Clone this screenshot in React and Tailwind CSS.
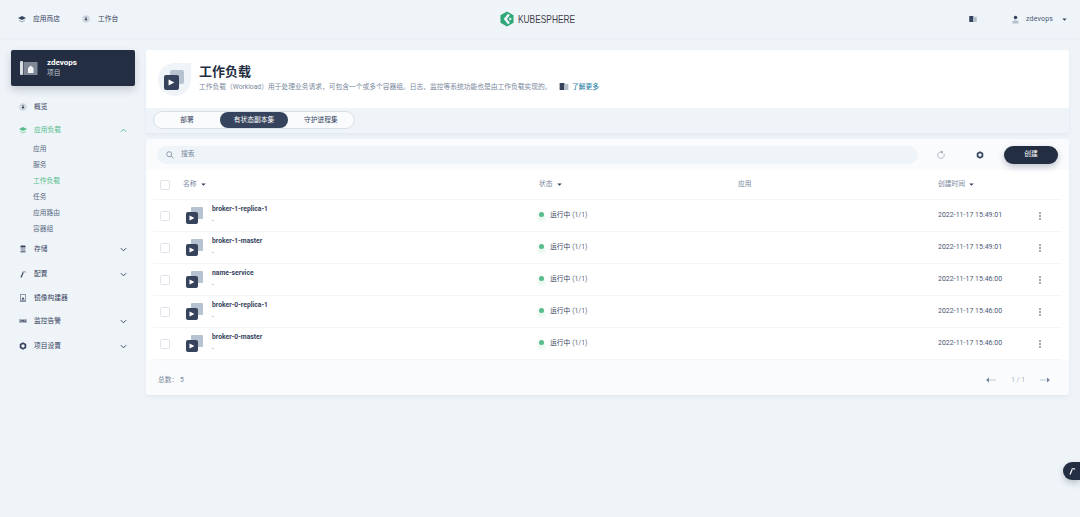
import React from 'react';

const rows = [
  { name: 'broker-1-replica-1', time: '2022-11-17 15:49:01' },
  { name: 'broker-1-master', time: '2022-11-17 15:49:01' },
  { name: 'name-service', time: '2022-11-17 15:46:00' },
  { name: 'broker-0-replica-1', time: '2022-11-17 15:46:00' },
  { name: 'broker-0-master', time: '2022-11-17 15:46:00' },
];

const subItems = ['应用', '服务', '工作负载', '任务', '应用路由', '容器组'];

// Small duotone icons, drawn on a 16 box
const LayersIcon = ({ color = '#36435c', light = '#abb4be' }) => (
  <svg className="w-[8px] h-[8px]" viewBox="0 0 16 16">
    <path d="M8 2l8 4-8 4-8-4z" fill={color} />
    <path d="M2 9.500l6 3 6-3V12l-6 3-6-3z" fill={light} />
  </svg>
);

const DashIcon = () => (
  <svg className="w-[8px] h-[8px]" viewBox="0 0 16 16">
    <circle cx="8" cy="8" r="7.500" fill="#d0d7df" />
    <path d="M8 3.500v4" stroke="#36435c" strokeWidth="1.500" />
    <circle cx="8" cy="9" r="2.200" fill="#36435c" />
  </svg>
);

const StoreIcon = () => (
  <svg className="w-[8px] h-[8px]" viewBox="0 0 16 16">
    <rect x="3" y="1" width="10" height="4" rx="1" fill="#36435c" />
    <rect x="3" y="6" width="10" height="4" fill="#abb4be" />
    <rect x="3" y="11" width="10" height="4" rx="1" fill="#6c7a90" />
  </svg>
);

const HammerIcon = ({ color = '#abb4be', handle = '#36435c', className = 'w-[8px] h-[8px]' }) => (
  <svg className={className} viewBox="0 0 16 16">
    <path d="M6 2h7l2 4-5-1.500z" fill={color} />
    <path d="M8.500 4.500L4 15" stroke={handle} strokeWidth="2.400" />
  </svg>
);

const BuilderIcon = () => (
  <svg className="w-[8px] h-[8px]" viewBox="0 0 16 16">
    <rect x="2" y="0" width="12" height="16" fill="#8e9aab" />
    <rect x="4" y="2" width="8" height="10" fill="#eff4f9" />
    <path d="M8 6l3 5H5z" fill="#36435c" />
  </svg>
);

const MonitorIcon = () => (
  <svg className="w-[8px] h-[8px]" viewBox="0 0 16 16">
    <rect x="0" y="4" width="16" height="8" rx="1" fill="#abb4be" />
    <path d="M2 8h4l2-2 1.500 4L11 8h3" fill="none" stroke="#36435c" strokeWidth="1.800" />
  </svg>
);

const GearIcon = ({ hole = '#eff4f9' }) => (
  <svg className="w-[8px] h-[8px]" viewBox="0 0 16 16">
    <path d="M8 .500l6.500 3.700v7.600L8 15.500l-6.500-3.700V4.200z" fill="#36435c" />
    <circle cx="8" cy="8" r="3.400" fill={hole} />
  </svg>
);

const Chevron = ({ up, color = '#36435c' }) => (
  <svg className="w-[7px] h-[7px]" viewBox="0 0 8 8" fill="none" stroke={color} strokeWidth="1.100">
    <path d={up ? 'M1 5.500l3-3 3 3' : 'M1 2.500l3 3 3-3'} />
  </svg>
);

const Caret = () => (
  <svg className="w-[5px] h-[3px]" viewBox="0 0 6 4">
    <path d="M0 .500h6L3 3.500z" fill="#36435c" />
  </svg>
);

const BookIcon = ({ className }) => (
  <svg className={className} viewBox="0 0 10 8">
    <rect x="0" y="0" width="5.500" height="8" fill="#36435c" />
    <rect x="5.500" y="1" width="4.500" height="7" fill="#b6c0cb" />
  </svg>
);

// Workload icon: two overlapping squares with a play mark
const WorkloadIcon = () => (
  <div className="relative w-[17px] h-[17px]">
    <div className="absolute right-0 top-0 w-[12px] h-[12px] rounded-[1px] bg-[#b6c2cf]" />
    <div className="absolute left-0 bottom-0 w-[12px] h-[12px] rounded-[2px] bg-[#36435c] flex items-center justify-center">
      <svg className="w-[6px] h-[6px]" viewBox="0 0 6 6"><path d="M.500 .500L5.500 3 .500 5.500z" fill="#fff" /></svg>
    </div>
  </div>
);

const Checkbox = () => <div className="w-[10px] h-[10px] rounded-[2px] border border-[#dfe4ea] bg-white shrink-0" />;

const NavItem = ({ icon, label, chevron, active, className }) => (
  <div className={`flex items-center h-[14px] pl-[7px] pr-[8px] ${className}`}>
    <span className="w-[10px] flex justify-center">{icon}</span>
    <span className={`ml-[6px] flex-1 ${active ? 'text-[#55bc8a]' : 'text-[#36435c]'}`}>{label}</span>
    {chevron && <Chevron up={active} color={active ? '#55bc8a' : '#36435c'} />}
  </div>
);

export default function App() {
  return (
    <div className="w-[1080px] h-[517px] overflow-hidden relative bg-[#eff4f9] text-[6.75px] text-[#36435c] font-['Roboto','Noto_Sans_CJK_SC',sans-serif]">
      {/* top bar */}
      <header className="h-[38px] flex items-center justify-between pl-[18px] pr-[13px] shadow-[0_1px_2px_rgba(36,46,66,0.03)]">
        <div className="flex items-center w-[300px]">
          <LayersIcon />
          <span className="ml-[7px]">应用商店</span>
          <span className="ml-[22px]"><DashIcon /></span>
          <span className="ml-[8px]">工作台</span>
        </div>
        <div className="flex items-center gap-[4px] mr-[9px]">
          <svg className="w-[14px] h-[16px]" viewBox="0 0 15 16">
            <path d="M7.500 0L14.500 4v8l-7 4-7-4V4z" fill="#2fa878" />
            <path d="M8.500 2.500L4 8l4.500 5.500 2.200-1.300L7.500 8l3.200-4.200z" fill="#eff4f9" />
            <path d="M10 6.200L12.800 8 10 9.800z" fill="#eff4f9" />
          </svg>
          <span className="w-[58px] inline-block whitespace-nowrap origin-left scale-x-[0.76] font-['Liberation_Sans',sans-serif] text-[11px] text-[#3f3f4a]">KUBESPHERE</span>
        </div>
        <div className="flex items-center w-[300px] justify-end">
          <BookIcon className="w-[8px] h-[6px]" />
          <svg className="ml-[35px] w-[7px] h-[9px]" viewBox="0 0 8 9">
            <circle cx="4" cy="2.200" r="2" fill="#36435c" />
            <path d="M.500 9V6.500L4 5l3.500 1.500V9z" fill="#b6c0cb" />
          </svg>
          <span className="ml-[7px] text-[7px] tracking-[0.15px] text-[#4a5974]">zdevops</span>
          <span className="ml-[9px]"><Caret /></span>
        </div>
      </header>

      <div className="flex mt-[12px]">
        {/* sidebar */}
        <aside className="w-[146px] shrink-0 pl-[11px] pr-[11px]">
          <div className="h-[36px] rounded-[2px] bg-[#242e42] shadow-[0_4px_8px_rgba(36,46,66,0.2)] flex items-center pl-[9px]">
            <svg className="w-[18px] h-[16px]" viewBox="0 0 18 16">
              <rect x="0" y="1" width="3" height="14" rx="1" fill="#d9dee4" />
              <rect x="3.500" y="2" width="14" height="13" fill="#7f8896" />
              <path d="M8 8l2.800-2.500L13.500 8v5H8z" fill="#f2f4f7" />
            </svg>
            <div className="ml-[9px] leading-[11px]">
              <div className="text-[8px] text-white font-bold">zdevops</div>
              <div className="text-[#c1c9d1]">项目</div>
            </div>
          </div>

          <NavItem className="mt-[14px]" icon={<DashIcon />} label="概览" />
          <NavItem className="mt-[9px]" icon={<LayersIcon color="#55bc8a" light="#9ddcbc" />} label="应用负载" chevron active />
          <div className="mt-[4px] pl-[22px]">
            {subItems.map((item) => (
              <div key={item} className={`h-[16px] flex items-center ${item === '工作负载' ? 'text-[#55bc8a]' : 'text-[#5a6a80]'}`}>{item}</div>
            ))}
          </div>
          <NavItem className="mt-[5px]" icon={<StoreIcon />} label="存储" chevron />
          <NavItem className="mt-[11px]" icon={<HammerIcon />} label="配置" chevron />
          <NavItem className="mt-[10px]" icon={<BuilderIcon />} label="镜像构建器" />
          <NavItem className="mt-[9px]" icon={<MonitorIcon />} label="监控告警" chevron />
          <NavItem className="mt-[11px]" icon={<GearIcon />} label="项目设置" chevron />
        </aside>

        {/* main */}
        <main className="w-[923px]">
          <section className="rounded-[3px] shadow-[0_2px_4px_rgba(36,46,66,0.06)] overflow-hidden">
            <div className="h-[58px] bg-white flex items-center pl-[12px]">
              <div className="relative w-[33px] h-[33px] rounded-full rounded-tr-none bg-[#eff4f9] shrink-0">
                <div className="absolute left-[12px] top-[7px] w-[14px] h-[14px] rounded-[2px] bg-[#b6c2cf]" />
                <div className="absolute left-[6px] top-[12px] w-[15px] h-[15px] rounded-[2px] bg-[#36435c] flex items-center justify-center">
                  <svg className="w-[7px] h-[7px]" viewBox="0 0 6 6"><path d="M.500 .500L5.500 3 .500 5.500z" fill="#fff" /></svg>
                </div>
              </div>
              <div className="ml-[8px]">
                <h1 className="text-[13px] leading-[16px] font-bold text-[#242e42] mt-[-3px]">工作负载</h1>
                <div className="flex items-center mt-[2px] leading-[10px] text-[#79879c]">
                  <span className="w-[350px] whitespace-nowrap">工作负载（Workload）用于处理业务请求，可包含一个或多个容器组。日志、监控等系统功能也是由工作负载实现的。</span>
                  <BookIcon className="ml-[10px] w-[10px] h-[7px]" />
                  <span className="ml-[3px] text-[#3385a8] font-medium">了解更多</span>
                </div>
              </div>
            </div>
            <div className="h-[25px] bg-[#eff4f9] pl-[7px] pt-[3px]">
              <div className="w-[202px] h-[18px] rounded-full border border-[#d8dee5] bg-[#f9fbfd] flex items-center">
                <div className="w-[66px] text-center">部署</div>
                <div className="w-[68px] h-[16px] rounded-full bg-[#36435c] text-white flex items-center justify-center">有状态副本集</div>
                <div className="flex-1 text-center">守护进程集</div>
              </div>
            </div>
          </section>

          <section className="mt-[6px] rounded-[3px] shadow-[0_2px_4px_rgba(36,46,66,0.06)] overflow-hidden bg-white">
            <div className="h-[31px] bg-[#f9fbfd] flex items-center pl-[11px] pr-[11px]">
              <div className="w-[761px] h-[18px] rounded-full bg-[#eff4f9] flex items-center pl-[9px]">
                <svg className="w-[8px] h-[8px]" viewBox="0 0 8 8" fill="none" stroke="#79879c" strokeWidth="0.800">
                  <circle cx="3.200" cy="3.200" r="2.500" />
                  <path d="M5 5l2.500 2.500" />
                </svg>
                <span className="ml-[7px] text-[#79879c]">搜索</span>
              </div>
              <svg className="ml-[19px] w-[8px] h-[8px]" viewBox="0 0 8 8" fill="none" stroke="#abb4be" strokeWidth="0.900">
                <path d="M6.800 2.500A3.300 3.300 0 1 1 4.500 .900" />
                <path d="M4.500 0v2.200L6 1z" fill="#36435c" stroke="none" />
              </svg>
              <span className="ml-[31px] flex"><GearIcon hole="#f0f3f7" /></span>
              <button className="ml-[20px] w-[54px] h-[18px] rounded-full bg-[#242e42] text-white shadow-[0_3px_6px_rgba(36,46,66,0.25)]">创建</button>
            </div>

            <div className="px-[7px]">
              <div className="h-[30px] flex items-center border-b border-[#f3f6f9] text-[#79879c]">
                <div className="w-[30px] pl-[7px]"><Checkbox /></div>
                <div className="w-[356px] flex items-center gap-[4px]">名称 <Caret /></div>
                <div className="w-[199px] flex items-center gap-[4px]">状态 <Caret /></div>
                <div className="w-[200px]">应用</div>
                <div className="flex items-center gap-[4px]">创建时间 <Caret /></div>
              </div>
              {rows.map((row) => (
                <div key={row.name} className="h-[32px] flex items-center border-b border-[#f3f6f9]">
                  <div className="w-[33px] pl-[7px]"><Checkbox /></div>
                  <WorkloadIcon />
                  <div className="w-[327px] ml-[9px] leading-[11px]">
                    <div className="font-bold">{row.name}</div>
                    <div className="text-[#79879c] mt-[1px]">-</div>
                  </div>
                  <div className="w-[199px] flex items-center">
                    <span className="w-[5px] h-[5px] rounded-full bg-[#55bc8a] mt-[-3px] shadow-[0_3px_4px_rgba(85,188,138,0.35)]" />
                    <span className="ml-[6px]">运行中</span>
                    <span className="ml-[2px] text-[#5a6a80]">(1/1)</span>
                  </div>
                  <div className="w-[200px]" />
                  <div className="w-[101px] text-[7px] text-[#4a5974] whitespace-nowrap">{row.time}</div>
                  <svg className="w-[2px] h-[8px]" viewBox="0 0 2 8" fill="#36435c">
                    <circle cx="1" cy="1" r="0.800" /><circle cx="1" cy="4" r="0.800" /><circle cx="1" cy="7" r="0.800" />
                  </svg>
                </div>
              ))}
            </div>

            <div className="h-[35px] bg-[#f9fbfd] flex items-center pl-[12px] pr-[19px] pt-[5px] text-[#79879c]">
              <span className="flex-1">总数： 5</span>
              <svg className="w-[10px] h-[6px]" viewBox="0 0 10 6" fill="none" stroke="#abb4be" strokeWidth="0.700"><path d="M10 3H1" /><path d="M0 3l3-2.500v5z" fill="#79879c" stroke="none" /></svg>
              <span className="mx-[15px] text-[#abb4be]">1 / 1</span>
              <svg className="w-[10px] h-[6px]" viewBox="0 0 10 6" fill="none" stroke="#abb4be" strokeWidth="0.700"><path d="M0 3h9" /><path d="M10 3L7 .500v5z" fill="#79879c" stroke="none" /></svg>
            </div>
          </section>
        </main>
      </div>

      {/* floating toolbox button */}
      <div className="absolute right-0 top-[462px] w-[17px] h-[18px] rounded-l-full bg-[#242e42] shadow-[0_3px_6px_rgba(36,46,66,0.25)] flex items-center justify-center">
        <HammerIcon color="#d5dbe2" handle="#ffffff" />
      </div>
    </div>
  );
}
